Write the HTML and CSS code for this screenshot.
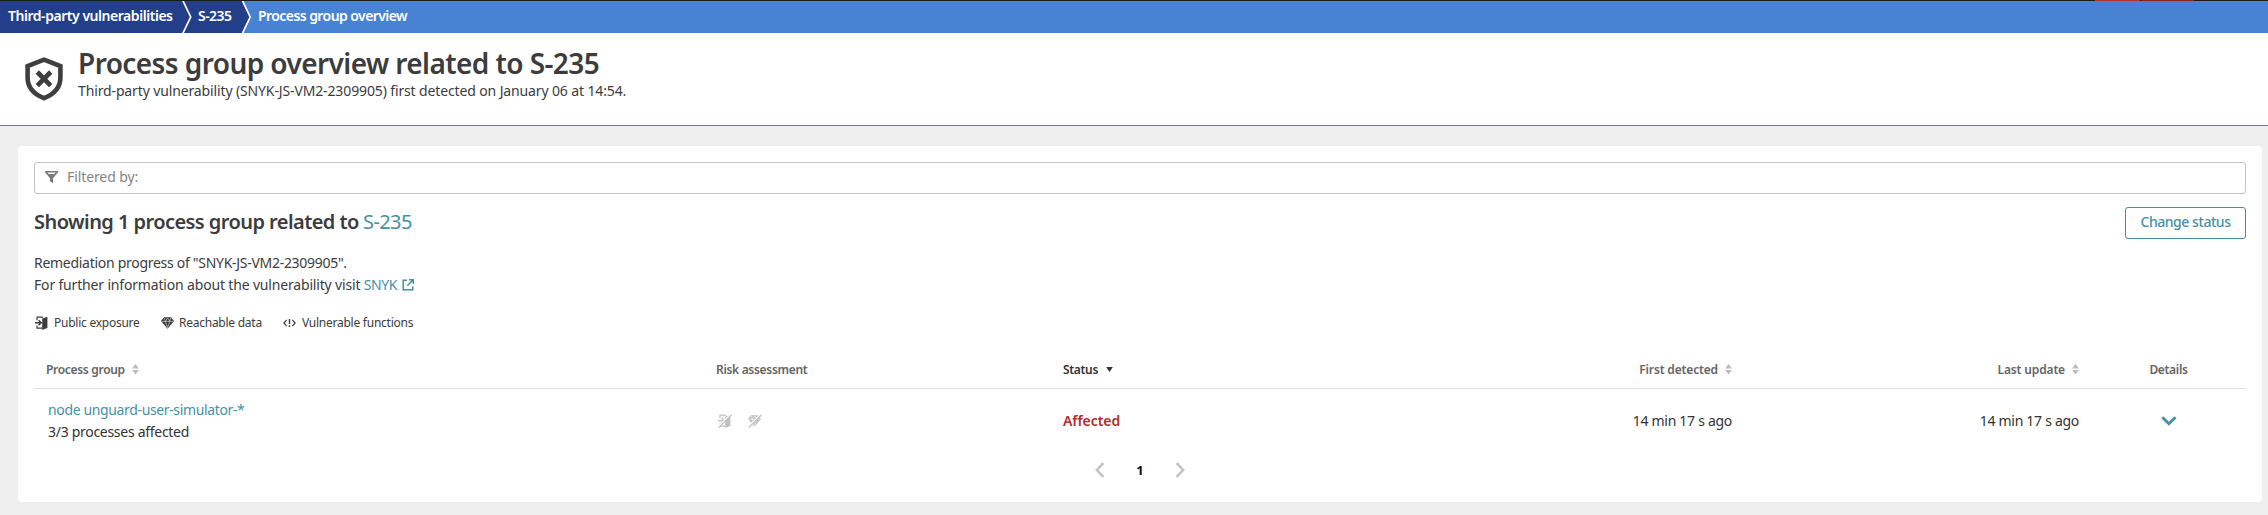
FILE: index.html
```html
<!DOCTYPE html>
<html lang="en">
<head>
<meta charset="utf-8">
<title>Process group overview</title>
<link rel="stylesheet" href="styles.css">
</head>
<body>
<svg class="defs" width="0" height="0">
  <symbol id="door" viewBox="0 0 13 14">
    <path d="M2 4.200V1.200H8M2 9.500v2.600H7" fill="none" stroke="currentColor" stroke-width="1.200"/>
    <path d="M0 6.800h6M3.600 4.300l2.600 2.500-2.600 2.500" fill="none" stroke="currentColor" stroke-width="1.500"/>
    <path d="M7.200 2.600 12.400.7v11.400l-5.200 1.900z" fill="currentColor"/>
  </symbol>
  <symbol id="gem" viewBox="0 0 13 12">
    <path d="M3 .3h7l3 3.800-6.500 7.600L0 4.100z" fill="currentColor"/>
    <path d="M1 4.400h11M3.200.8l1.100 3.400L6.500 1l2.200 3.200L9.800.8M4.200 4.400l2.300 6.200 2.300-6.200" fill="none" stroke="#fff" stroke-width=".5"/>
  </symbol>
  <symbol id="sort" viewBox="0 0 7 11">
    <path d="M3.500 0 6.900 4.500H.1zM.1 6.100h6.800L3.500 10.600z" fill="#bcbcbc"/>
  </symbol>
</svg>

<div class="topbar"><i class="alert"></i><i class="alert alert-dark"></i></div>

<nav class="crumbs">
  <a class="crumb crumb-first">Third-party vulnerabilities</a>
  <svg class="crumb-sep" viewBox="0 0 11 32"><path d="M0 0h11v32H0z" fill="#243f8a"/><path d="M.8-.5 8.700 16 .8 32.500" fill="none" stroke="#fff" stroke-width="1.700"/></svg>
  <a class="crumb crumb-id">S-235</a>
  <svg class="crumb-sep" viewBox="0 0 11 32"><path d="M0 0h.6l7.700 16L.6 32H0z" fill="#243f8a"/><path d="M.4-.5 8.200 16 .4 32.500" fill="none" stroke="#fff" stroke-width="1.700"/></svg>
  <span class="crumb crumb-current">Process group overview</span>
</nav>

<header class="header">
  <svg class="shield" viewBox="0 0 38 44">
    <path d="M19 2.700 35.400 9v11.500c0 9.500-6.300 16.700-16.400 20.700C8.900 37.200 2.600 30 2.600 20.500V9z" fill="none" stroke="#3e3e3e" stroke-width="4.600"/>
    <path d="m12.300 15 13.400 13.600M25.700 15 12.300 28.600" fill="none" stroke="#3e3e3e" stroke-width="4.700"/>
  </svg>
  <div>
    <h1 class="title">Process group overview related to S-235</h1>
    <p class="subtitle">Third-party vulnerability (SNYK-JS-VM2-2309905) first detected on January 06 at 14:54.</p>
  </div>
</header>

<main class="panel">
  <div class="filter">
    <svg class="filter-icon" viewBox="0 0 13 12"><path d="M0 0h13v1.300L8 7.200V12L5 10.300V7.200L0 1.300z" fill="#7a7a7a"/><path d="M2.400 1.600h8.200L9.300 3.100H3.700z" fill="#fff"/></svg>
    <span class="filter-label">Filtered by:</span>
  </div>

  <div class="heading">
    <h2 class="subtitle-2">Showing 1 process group related to</h2>
    <a class="heading-link">S-235</a>
    <button class="button">Change status</button>
  </div>

  <p class="info info-progress">Remediation progress of "SNYK-JS-VM2-2309905".</p>
  <p class="info info-more">For further information about the vulnerability visit <a class="snyk">SNYK</a><svg class="external" viewBox="0 0 12 12"><path d="M5 1.200H1.200v9.600h9.600V7.500M7 .8h4.300V5M11 1 5.300 6.700" fill="none" stroke="currentColor" stroke-width="1.500"/></svg></p>

  <div class="legend">
    <svg class="door"><use href="#door"/></svg><span class="legend-public">Public exposure</span>
    <svg class="gem"><use href="#gem"/></svg><span class="legend-data">Reachable data</span>
    <svg class="code" viewBox="0 0 13 8"><path d="M3.700.8.900 4l2.800 3.200M9.300.8 12.100 4 9.300 7.200" fill="none" stroke="currentColor" stroke-width="1.200"/><path d="M6.500 0v5M6.500 6.300V8" stroke="currentColor" stroke-width="1.400"/></svg><span>Vulnerable functions</span>
  </div>

  <div class="row head">
    <div class="cell">Process group<svg class="sort"><use href="#sort"/></svg></div>
    <div class="cell">Risk assessment</div>
    <div class="cell sorted">Status<svg class="sorted-icon" viewBox="0 0 7 5"><path d="M.2 0h6.600L3.500 5z" fill="#333"/></svg></div>
    <div class="cell right date-head">First detected<svg class="sort"><use href="#sort"/></svg></div>
    <div class="cell right date-head">Last update<svg class="sort"><use href="#sort"/></svg></div>
    <div class="cell center">Details</div>
  </div>
  <div class="row body">
    <div class="cell process"><a class="process-link">node unguard-user-simulator-*</a><span>3/3 processes affected</span></div>
    <div class="cell risk">
      <svg viewBox="0 0 14 14"><use href="#door" width="13" height="14"/><path d="M0 12.800 12.800 0" stroke="#fff" stroke-width="1.200"/><path d="M.6 13.800 13.800.6" stroke="currentColor" stroke-width="1.100"/></svg>
      <svg viewBox="0 0 14 14"><use href="#gem" y="1" width="13" height="12"/><path d="M0 12.800 12.800 0" stroke="#fff" stroke-width="1.200"/><path d="M.8 13.500 13.800.6" stroke="currentColor" stroke-width="1.100"/></svg>
    </div>
    <div class="cell affected">Affected</div>
    <div class="cell right">14 min 17 s ago</div>
    <div class="cell right">14 min 17 s ago</div>
    <div class="cell center"><svg class="expand" viewBox="0 0 16 10"><path d="m1.300 1.200 6.600 6.500 6.600-6.500" fill="none" stroke="#4690a5" stroke-width="2.900"/></svg></div>
  </div>

  <div class="pager">
    <svg viewBox="0 0 10 16"><path d="M8.300 1.200 1.900 8l6.400 6.800" fill="none" stroke="#c1c1c1" stroke-width="2.500"/></svg>
    <b>1</b>
    <svg viewBox="0 0 10 16"><path d="M1.700 1.200 8.100 8l-6.400 6.800" fill="none" stroke="#c1c1c1" stroke-width="2.500"/></svg>
  </div>
</main>
</body>
</html>
```
FILE: styles.css
```css
* { box-sizing: border-box; }
body {
  margin: 0;
  background: #efefef;
  color: #3c3c3c;
  font: 14px/22px "Noto Sans", "Open Sans", sans-serif;
  white-space: nowrap;
}
h1, h2, p { margin: 0; }
svg { flex: none; display: block; }
.defs { position: absolute; }

.topbar { display: flex; gap: 1px; height: 1px; background: #1c1c1c; padding-left: 2095px; }
.alert { width: 45px; background: #b43331; }
.alert-dark { width: 53px; background: #85231f; }

.crumbs { display: flex; height: 32px; background: #4782d3; color: #fff; font-weight: 600; }
.crumb { height: 32px; line-height: 30px; }
.crumb-first { width: 182px; padding-left: 8px; background: #243f8a; letter-spacing: -.46px; }
.crumb-sep { width: 11px; height: 32px; }
.crumb-id { width: 49px; padding-left: 5px; background: #243f8a; letter-spacing: -.54px; }
.crumb-current { padding-left: 5px; letter-spacing: -.57px; }

.header {
  display: flex;
  height: 93px;
  padding: 12px 25px 0;
  gap: 15px;
  background: #fff;
  border-bottom: 1px solid #4782d3;
}
.shield { width: 38px; height: 44px; margin-top: 12px; }
.title { font-size: 28px; line-height: 36px; font-weight: 600; letter-spacing: -.58px; }
.subtitle { line-height: 20px; letter-spacing: -.13px; }

.panel {
  height: 356px;
  margin: 20px 6px 0 18px;
  padding: 16px;
  background: #fff;
  border-radius: 4px;
}
.filter {
  display: flex;
  align-items: center;
  gap: 9px;
  height: 32px;
  padding: 0 10px 2px;
  border: 1px solid #c4c4c4;
  border-radius: 3px;
}
.filter-icon { width: 13px; height: 12px; }
.filter-label { color: #848484; letter-spacing: -.1px; }

.heading { display: flex; margin-top: 13px; height: 32px; font-size: 20px; line-height: 29px; }
.subtitle-2 { width: 329px; font-size: 20px; font-weight: 600; letter-spacing: -.56px; }
.heading-link { color: #4690a5; letter-spacing: -.6px; }
.button {
  width: 121px;
  height: 32px;
  margin-left: auto;
  padding: 0 0 2px;
  border: 1px solid #4690a5;
  border-radius: 3px;
  background: #fff;
  color: #4690a5;
  font: 500 14px/28px "Noto Sans", sans-serif;
  letter-spacing: -.45px;
}

.info-progress { margin-top: 13px; letter-spacing: -.285px; }
.info-more { display: flex; align-items: center; letter-spacing: -.17px; white-space: pre; }
.snyk { width: 38px; color: #4690a5; letter-spacing: -.4px; }
.external { width: 12px; height: 12px; color: #4690a5; }

.legend {
  display: flex;
  align-items: center;
  height: 20px;
  margin-top: 17px;
  font-size: 12px;
  line-height: 20px;
  letter-spacing: -.25px;
}
.door { width: 13px; height: 14px; margin: 0 6px 0 1px; }
.gem { width: 13px; height: 12px; margin-right: 5px; }
.code { width: 13px; height: 8px; margin-right: 6px; }
.legend-public { width: 107px; }
.legend-data { width: 104px; }

.row {
  display: grid;
  grid-template-columns: 682px 347px 341px 328px 347px 167px;
  align-items: center;
}
.cell { display: flex; align-items: center; }
.head {
  height: 37px;
  margin-top: 19px;
  padding-top: 8px;
  border-bottom: 1px solid #dedede;
  color: #646464;
  font-size: 12px;
  font-weight: 600;
  line-height: 20px;
  letter-spacing: -.31px;
  align-items: start;
}
.head .cell:first-child { padding-left: 12px; }
.sort { width: 7px; height: 11px; margin: -2px 0 0 7px; }
.sorted { color: #333; }
.sorted-icon { width: 7px; height: 5px; margin: -2px 0 0 8px; }
.right { justify-content: flex-end; }
.date-head { letter-spacing: -.15px; }
.center { justify-content: center; padding-left: 12px; }

.body { height: 62px; padding-top: 2px; letter-spacing: -.29px; color: #333; }
.process { flex-direction: column; align-items: flex-start; padding-left: 14px; }
.process-link { color: #4690a5; letter-spacing: -.36px; }
.risk { gap: 16px; padding-left: 2px; color: #c0c0c0; }
.risk svg { width: 14px; height: 14px; }
.affected { color: #b32b29; font-weight: 600; letter-spacing: -.07px; }
.expand { width: 16px; height: 10px; }

.pager {
  display: flex;
  align-items: center;
  justify-content: center;
  height: 22px;
  margin: 8px 0 0;
  gap: 31px;
  color: #111;
  font-size: 13px;
}
.pager svg { width: 10px; height: 16px; }
```
